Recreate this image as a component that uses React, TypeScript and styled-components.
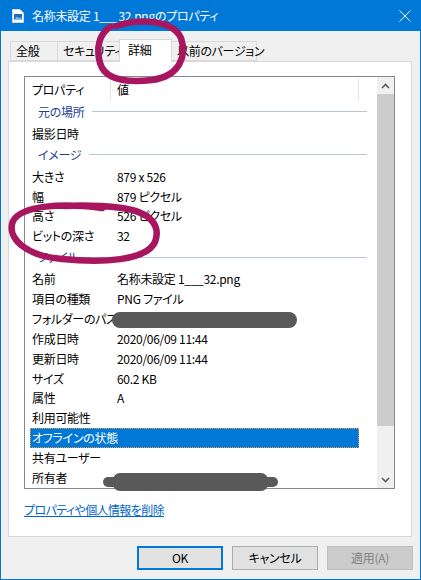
import React from 'react';
import styled, { createGlobalStyle } from 'styled-components';

const Global = createGlobalStyle`
  html, body { margin: 0; padding: 0; background: #ffffff; }
  body {
    font-family: "Noto Sans CJK JP", "Noto Sans", sans-serif;
    font-size: 12px;
    font-feature-settings: "palt";
    letter-spacing: -0.3px;
    color: #000000;
  }
  * { box-sizing: border-box; }
`;

const Window = styled.div`
  position: relative;
  width: 421px;
  height: 580px;
  border: 1px solid #0078d7;
  border-top: none;
  background: #f0f0f0;
  display: flex;
  flex-direction: column;
  overflow: hidden;
`;

const TitleBar = styled.div`
  height: 31px;
  background: #0078d7;
  display: flex;
  align-items: center;
  padding: 0 9px 0 11px;
  color: #ffffff;
`;

const TitleText = styled.span`
  margin-left: 8px;
  font-size: 12px;
  line-height: 16px;
  white-space: nowrap;
`;

const CloseBox = styled.div`
  margin-left: auto;
  display: flex;
  align-items: center;
`;

const TabStrip = styled.div`
  margin-top: 8px;
  padding-left: 9px;
  height: 22px;
  display: flex;
  align-items: flex-end;
  position: relative;
  z-index: 2;
`;

const Tab = styled.div<{ $w: number; $active?: boolean }>`
  width: ${p => p.$w}px;
  height: ${p => (p.$active ? 23 : 20)}px;
  margin-left: -1px;
  margin-bottom: ${p => (p.$active ? -1 : 0)}px;
  border: 1px solid #d9d9d9;
  border-bottom: ${p => (p.$active ? 'none' : '1px solid #d9d9d9')};
  background: ${p => (p.$active ? '#ffffff' : '#f0f0f0')};
  position: relative;
  z-index: ${p => (p.$active ? 2 : 1)};
  display: flex;
  align-items: center;
  padding-left: ${p => (p.$active ? 8 : 5)}px;
  padding-bottom: ${p => (p.$active ? 2 : 0)}px;
  font-size: 12px;
  line-height: 16px;
  white-space: nowrap;
  &:first-child { margin-left: 0; }
`;

const Panel = styled.div`
  margin-left: 7px;
  width: 404px;
  height: 476px;
  border: 1px solid #d9d9d9;
  background: #ffffff;
  padding: 14px 16px 0 15px;
  display: flex;
  flex-direction: column;
`;

const ListBox = styled.div`
  width: 371px;
  height: 413px;
  border: 1px solid #828790;
  display: flex;
  overflow: visible;
`;

const ListContent = styled.div`
  width: 352px;
  display: flex;
  flex-direction: column;
`;

const Header = styled.div`
  height: 24px;
  display: grid;
  grid-template-columns: 86px 248px 1fr;
  align-items: start;
`;

const HeaderCell = styled.div<{ $pad: number; $sep?: boolean }>`
  margin-top: 1px;
  height: 23px;
  border-right: ${p => (p.$sep ? '1px solid #e5e5e5' : 'none')};
  padding-left: ${p => p.$pad}px;
  display: flex;
  align-items: center;
  line-height: 16px;
  white-space: nowrap;
`;

const GroupRow = styled.div`
  height: 23px;
  display: flex;
  align-items: center;
  padding: 0 10px 1px 13px;
`;

const GroupLabel = styled.span`
  color: #1e3c9a;
  line-height: 16px;
  white-space: nowrap;
`;

const GroupLine = styled.div`
  flex: 1;
  height: 1px;
  margin-left: 8px;
  background: #b9c4d9;
`;

const Row = styled.div<{ $selected?: boolean }>`
  height: 20px;
  display: grid;
  grid-template-columns: ${p => (p.$selected ? '81px 1fr' : '86px 1fr')};
  align-items: center;
  margin-left: ${p => (p.$selected ? 5 : 0)}px;
  width: ${p => (p.$selected ? '329px' : 'auto')};
  background: ${p => (p.$selected ? '#0078d7' : 'transparent')};
  border: ${p => (p.$selected ? '1px dotted #e89a3a' : 'none')};
  color: ${p => (p.$selected ? '#ffffff' : '#000000')};
`;

const NameCell = styled.span<{ $selected?: boolean }>`
  padding-left: ${p => (p.$selected ? 1 : 7)}px;
  line-height: 16px;
  white-space: nowrap;
`;

const ValueCell = styled.span`
  padding-left: 6px;
  line-height: 16px;
  white-space: nowrap;
`;

const ScrollBar = styled.div`
  width: 17px;
  background: #f0f0f0;
  display: flex;
  flex-direction: column;
`;

const ScrollButton = styled.div`
  height: 17px;
  display: flex;
  align-items: center;
  justify-content: center;
`;

const Thumb = styled.div`
  height: 332px;
  background: #cdcdcd;
`;

const Spacer = styled.div`
  flex: 1;
`;

const Link = styled.a`
  margin-top: 13px;
  line-height: 16px;
  color: #0066cc;
  text-decoration: underline;
  align-self: flex-start;
  white-space: nowrap;
  letter-spacing: -0.6px;
`;

const ButtonRow = styled.div`
  margin-top: 9px;
  padding-right: 7px;
  display: flex;
  justify-content: flex-end;
  gap: 9px;
`;

const Button = styled.div<{ $kind: 'default' | 'normal' | 'disabled' }>`
  width: 86px;
  height: 24px;
  display: flex;
  align-items: center;
  justify-content: center;
  line-height: 16px;
  background: ${p => (p.$kind === 'disabled' ? '#cccccc' : '#e1e1e1')};
  border: ${p =>
    p.$kind === 'default'
      ? '2px solid #0078d7'
      : p.$kind === 'disabled'
      ? '1px solid #bfbfbf'
      : '1px solid #adadad'};
  color: ${p => (p.$kind === 'disabled' ? '#838383' : '#000000')};
`;

const Overlay = styled.svg`
  position: absolute;
  left: -1px;
  top: 0;
  pointer-events: none;
  z-index: 10;
`;

const Chevron = ({ up }: { up?: boolean }) => (
  <svg width="9" height="6" viewBox="0 0 9 6">
    <path
      d={up ? 'M1 5 L4.5 1.5 L8 5' : 'M1 1 L4.5 4.5 L8 1'}
      fill="none"
      stroke="#606060"
      strokeWidth="1.6"
    />
  </svg>
);

const FileIcon = () => (
  <svg width="12" height="14" viewBox="0 0 12 14">
    <path d="M0.5 0.5 H8 L11.5 4 V13.5 H0.5 Z" fill="#ffffff" stroke="#d0d8e0" />
    <rect x="2" y="5" width="8" height="6" fill="#1f6fb5" />
    <path d="M2 11 L5 7.5 L7 9.5 L8.5 8 L10 11 Z" fill="#7fc0f0" />
  </svg>
);

type Item =
  | { kind: 'group'; label: string }
  | { kind: 'row'; name: string; value?: string; selected?: boolean };

const items: Item[] = [
  { kind: 'group', label: '元の場所' },
  { kind: 'row', name: '撮影日時' },
  { kind: 'group', label: 'イメージ' },
  { kind: 'row', name: '大きさ', value: '879 x 526' },
  { kind: 'row', name: '幅', value: '879 ピクセル' },
  { kind: 'row', name: '高さ', value: '526 ピクセル' },
  { kind: 'row', name: 'ビットの深さ', value: '32' },
  { kind: 'group', label: 'ファイル' },
  { kind: 'row', name: '名前', value: '名称未設定 1___32.png' },
  { kind: 'row', name: '項目の種類', value: 'PNG ファイル' },
  { kind: 'row', name: 'フォルダーのパス' },
  { kind: 'row', name: '作成日時', value: '2020/06/09 11:44' },
  { kind: 'row', name: '更新日時', value: '2020/06/09 11:44' },
  { kind: 'row', name: 'サイズ', value: '60.2 KB' },
  { kind: 'row', name: '属性', value: 'A' },
  { kind: 'row', name: '利用可能性' },
  { kind: 'row', name: 'オフラインの状態', selected: true },
  { kind: 'row', name: '共有ユーザー' },
  { kind: 'row', name: '所有者' },
];

export default function App() {
  return (
    <>
      <Global />
      <Window>
        <TitleBar>
          <FileIcon />
          <TitleText>名称未設定 1___32.pngのプロパティ</TitleText>
          <CloseBox>
            <svg width="12" height="12" viewBox="0 0 12 12">
              <path d="M0.5 0.5 L11.5 11.5 M11.5 0.5 L0.5 11.5" stroke="#ffffff" strokeWidth="1" />
            </svg>
          </CloseBox>
        </TitleBar>

        <TabStrip>
          <Tab $w={48}>全般</Tab>
          <Tab $w={63}>セキュリティ</Tab>
          <Tab $w={53} $active>詳細</Tab>
          <Tab $w={86}>以前のバージョン</Tab>
        </TabStrip>

        <Panel>
          <ListBox>
            <ListContent>
              <Header>
                <HeaderCell $pad={7} $sep>プロパティ</HeaderCell>
                <HeaderCell $pad={6} $sep>値</HeaderCell>
                <HeaderCell $pad={0} />
              </Header>
              {items.map((it, i) =>
                it.kind === 'group' ? (
                  <GroupRow key={i}>
                    <GroupLabel>{it.label}</GroupLabel>
                    <GroupLine />
                  </GroupRow>
                ) : (
                  <Row key={i} $selected={it.selected}>
                    <NameCell $selected={it.selected}>{it.name}</NameCell>
                    <ValueCell>{it.value ?? ''}</ValueCell>
                  </Row>
                )
              )}
            </ListContent>
            <ScrollBar>
              <ScrollButton>
                <Chevron up />
              </ScrollButton>
              <Thumb />
              <Spacer />
              <ScrollButton>
                <Chevron />
              </ScrollButton>
            </ScrollBar>
          </ListBox>
          <Link>プロパティや個人情報を削除</Link>
        </Panel>

        <ButtonRow>
          <Button $kind="default">OK</Button>
          <Button $kind="normal">キャンセル</Button>
          <Button $kind="disabled">適用(A)</Button>
        </ButtonRow>

        <Overlay width="421" height="580" viewBox="0 0 421 580">
          <rect x="112" y="312" width="185" height="16" rx="8" fill="#595959" />
          <rect x="113" y="473" width="155" height="18" rx="7" fill="#595959" />
          <rect x="103" y="477" width="175" height="10" rx="5" fill="#595959" />
          <path
            d="M116 26 C140 18 173 20 181 38 C187 56 180 76 152 80 C126 83 105 80 100 63 C96 48 99 34 110 27"
            fill="none"
            stroke="#a8165f"
            strokeWidth="6.5"
            strokeLinecap="round"
          />
          <path
            d="M102 208 C62 203 22 205 13 221 C6 238 26 256 62 259 C102 263 146 261 155 242 C161 226 151 212 122 208 C104 206 84 205 66 206"
            fill="none"
            stroke="#a8165f"
            strokeWidth="6.5"
            strokeLinecap="round"
          />
        </Overlay>
      </Window>
    </>
  );
}
